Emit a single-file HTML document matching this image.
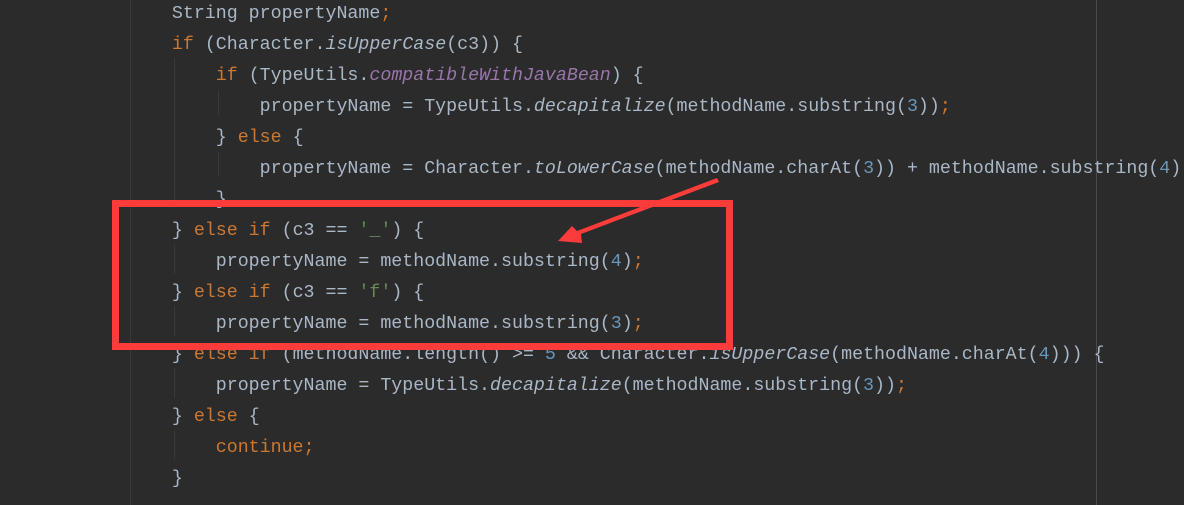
<!DOCTYPE html>
<html><head><meta charset="utf-8"><style>
html,body{margin:0;padding:0;background:#2b2b2b;width:1184px;height:505px;overflow:hidden}
pre{position:absolute;left:128px;top:-1px;margin:0;font-family:"Liberation Mono",monospace;font-size:18.3px;line-height:31px;color:#a9b7c6}
.k{color:#cc7832}.n{color:#6897bb}.s{color:#6a8759}.i{font-style:italic}.p{color:#9876aa;font-style:italic}
.g{position:absolute;width:1px;background:#393939}
</style></head><body>
<div class="g" style="left:130px;top:0;height:505px"></div>
<div class="g" style="left:174px;top:58px;height:150px"></div>
<div class="g" style="left:218px;top:90px;height:25px"></div>
<div class="g" style="left:218px;top:152px;height:25px"></div>
<div class="g" style="left:174px;top:244px;height:30px"></div>
<div class="g" style="left:174px;top:306px;height:30px"></div>
<div class="g" style="left:174px;top:368px;height:30px"></div>
<div class="g" style="left:174px;top:430px;height:30px"></div>
<div class="g" style="left:1096px;top:0;height:505px;background:#4a4a4a"></div>
<pre>    String propertyName<span class="k">;</span>
    <span class="k">if </span>(Character.<span class="i">isUpperCase</span>(c3)) {
        <span class="k">if </span>(TypeUtils.<span class="p">compatibleWithJavaBean</span>) {
            propertyName = TypeUtils.<span class="i">decapitalize</span>(methodName.substring(<span class="n">3</span>))<span class="k">;</span>
        } <span class="k">else </span>{
            propertyName = Character.<span class="i">toLowerCase</span>(methodName.charAt(<span class="n">3</span>)) + methodName.substring(<span class="n">4</span>)
        }
    } <span class="k">else if </span>(c3 == <span class="s">'_'</span>) {
        propertyName = methodName.substring(<span class="n">4</span>)<span class="k">;</span>
    } <span class="k">else if </span>(c3 == <span class="s">'f'</span>) {
        propertyName = methodName.substring(<span class="n">3</span>)<span class="k">;</span>
    } <span class="k">else if </span>(methodName.length() >= <span class="n">5 </span>&amp;&amp; Character.<span class="i">isUpperCase</span>(methodName.charAt(<span class="n">4</span>))) {
        propertyName = TypeUtils.<span class="i">decapitalize</span>(methodName.substring(<span class="n">3</span>))<span class="k">;</span>
    } <span class="k">else </span>{
        <span class="k">continue;</span>
    }</pre>
<svg width="1184" height="505" style="position:absolute;left:0;top:0">
<rect x="115.5" y="203.5" width="614" height="143" fill="none" stroke="#fc3b3b" stroke-width="7"/>
<polygon points="717,178 719,182 581,234 582,243 558,241 572,226 577,231" fill="#fc3b3b"/>
</svg>
</body></html>
